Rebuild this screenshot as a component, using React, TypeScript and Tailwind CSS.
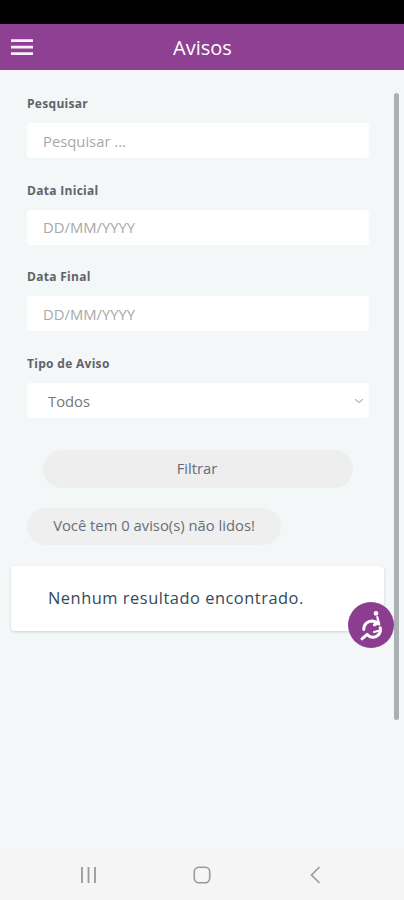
// src/App.tsx

interface FieldProps {
  id: string;
  label: string;
  placeholder: string;
}

function Field({ id, label, placeholder }: FieldProps) {
  return (
    <div className="h-[86.7px]">
      <label htmlFor={id} className="block h-[28px] text-[12px] leading-[17px] font-bold tracking-[0.3px] text-[#5f6468]">
        {label}
      </label>
      <input
        id={id}
        type="text"
        placeholder={placeholder}
        className="block h-[35px] w-full rounded-[4px] bg-white px-4 text-[14.8px] text-[#777] placeholder:text-[#a8a8a8] outline-none"
      />
    </div>
  );
}

function AccessibilityButton() {
  return (
    <button
      aria-label="Acessibilidade"
      className="absolute top-[531.5px] left-[348px] h-[46px] w-[46px] rounded-full bg-[#8c3d90]"
    >
      <svg viewBox="0 0 46 46" className="h-full w-full" fill="none" stroke="#fff" strokeLinecap="round" strokeLinejoin="round">
        <circle cx="28" cy="11.4" r="2.3" fill="#fff" stroke="none" />
        <path d="M29.3 15 31.2 22.6" strokeWidth="2.2" />
        <path d="M15.8 27.4C15.6 22.6 19.4 18.8 24.4 19L30.4 20.8 26.4 22.8" strokeWidth="3" />
        <path d="M14 36.8 19.2 32.4C21.6 35.6 26.4 36.6 29.8 33.4C32.2 31.2 33 28.6 32.2 25.8" strokeWidth="3" />
        <path d="M31 28.8 26 30" strokeWidth="2.2" />
      </svg>
    </button>
  );
}

export default function App() {
  return (
    <div className="flex h-[900px] w-[404px] flex-col overflow-hidden bg-[#f3f7f8] font-['Open_Sans',sans-serif]">
      {/* status bar */}
      <div className="h-6 shrink-0 bg-black" />

      <header className="grid h-[46px] shrink-0 grid-cols-[1fr_auto_1fr] items-center bg-[#8e4092] text-white">
        <button aria-label="Menu" className="ml-[10.5px] w-[22px]">
          <svg viewBox="0 0 22 16" className="block h-4 w-[22px]" stroke="#fbeefb" strokeWidth="2.6">
            <path d="M0 1.6H22M0 8.1H22M0 14.6H22" />
          </svg>
        </button>
        <h1 className="pt-0.5 pl-px text-[20px] leading-6">Avisos</h1>
      </header>

      <main className="relative flex-1 pt-[25px]">
        <form className="pr-[35px] pl-[27px]">
          <Field id="search" label="Pesquisar" placeholder="Pesquisar ..." />
          <Field id="start" label="Data Inicial" placeholder="DD/MM/YYYY" />
          <Field id="end" label="Data Final" placeholder="DD/MM/YYYY" />

          <div className="h-[94.5px]">
            <div className="h-[28px] text-[12px] leading-[17px] font-bold tracking-[0.3px] text-[#5f6468]">Tipo de Aviso</div>
            <div className="flex h-[35px] items-center justify-between rounded-[4px] bg-white pr-[5px] pl-[21px] text-[14.8px] text-[#777]">
              <span className="pt-px">Todos</span>
              <svg viewBox="0 0 10 6" className="h-[6px] w-[10px]" fill="none" stroke="#999" strokeWidth="1">
                <path d="M1 1.2 5 4.5 9 1.2" />
              </svg>
            </div>
          </div>

          <button type="button" className="mx-4 block h-[38px] w-[310px] rounded-full bg-[#eeeeee] pr-0.5 text-[14.8px] text-[#666c76]">
            Filtrar
          </button>
        </form>

        <div className="mt-[20.5px] ml-[27px] flex h-[37px] w-[254px] items-center justify-center rounded-full bg-[#efefef] pb-0.5 text-[14.8px] whitespace-nowrap text-[#65707a]">
          Você tem 0 aviso(s) não lidos!
        </div>

        <div className="mt-[21px] ml-[11px] flex h-[65px] w-[373px] items-center rounded-[4px] bg-white pl-[37px] text-[16.4px] font-medium tracking-[0.53px] whitespace-nowrap text-[#34495a] shadow-[0_1px_3px_rgba(0,0,0,0.16)]">
          Nenhum resultado encontrado.
        </div>

        {/* scrollbar */}
        <div className="absolute top-[23px] left-[394px] h-[627px] w-[5px] rounded-full bg-[#aaafb1]" />
        <AccessibilityButton />
      </main>

      <nav className="flex h-[50px] shrink-0 items-center justify-between bg-[#f5f5f5] px-[79px]">
        <svg viewBox="0 0 18 18" className="h-[18px] w-[18px]" stroke="#999" strokeWidth="1.8">
          <path d="M3 1V17M9.5 1V17M16 1V17" />
        </svg>
        <svg viewBox="0 0 18 18" className="h-[18px] w-[18px]" fill="none" stroke="#999" strokeWidth="1.6">
          <rect x="1.3" y="1.3" width="15.4" height="15.4" rx="4.5" />
        </svg>
        <svg viewBox="0 0 18 18" className="h-[18px] w-[18px]" fill="none" stroke="#999" strokeWidth="1.6">
          <path d="M12.5 1 4.5 9 12.5 17" />
        </svg>
      </nav>
    </div>
  );
}
